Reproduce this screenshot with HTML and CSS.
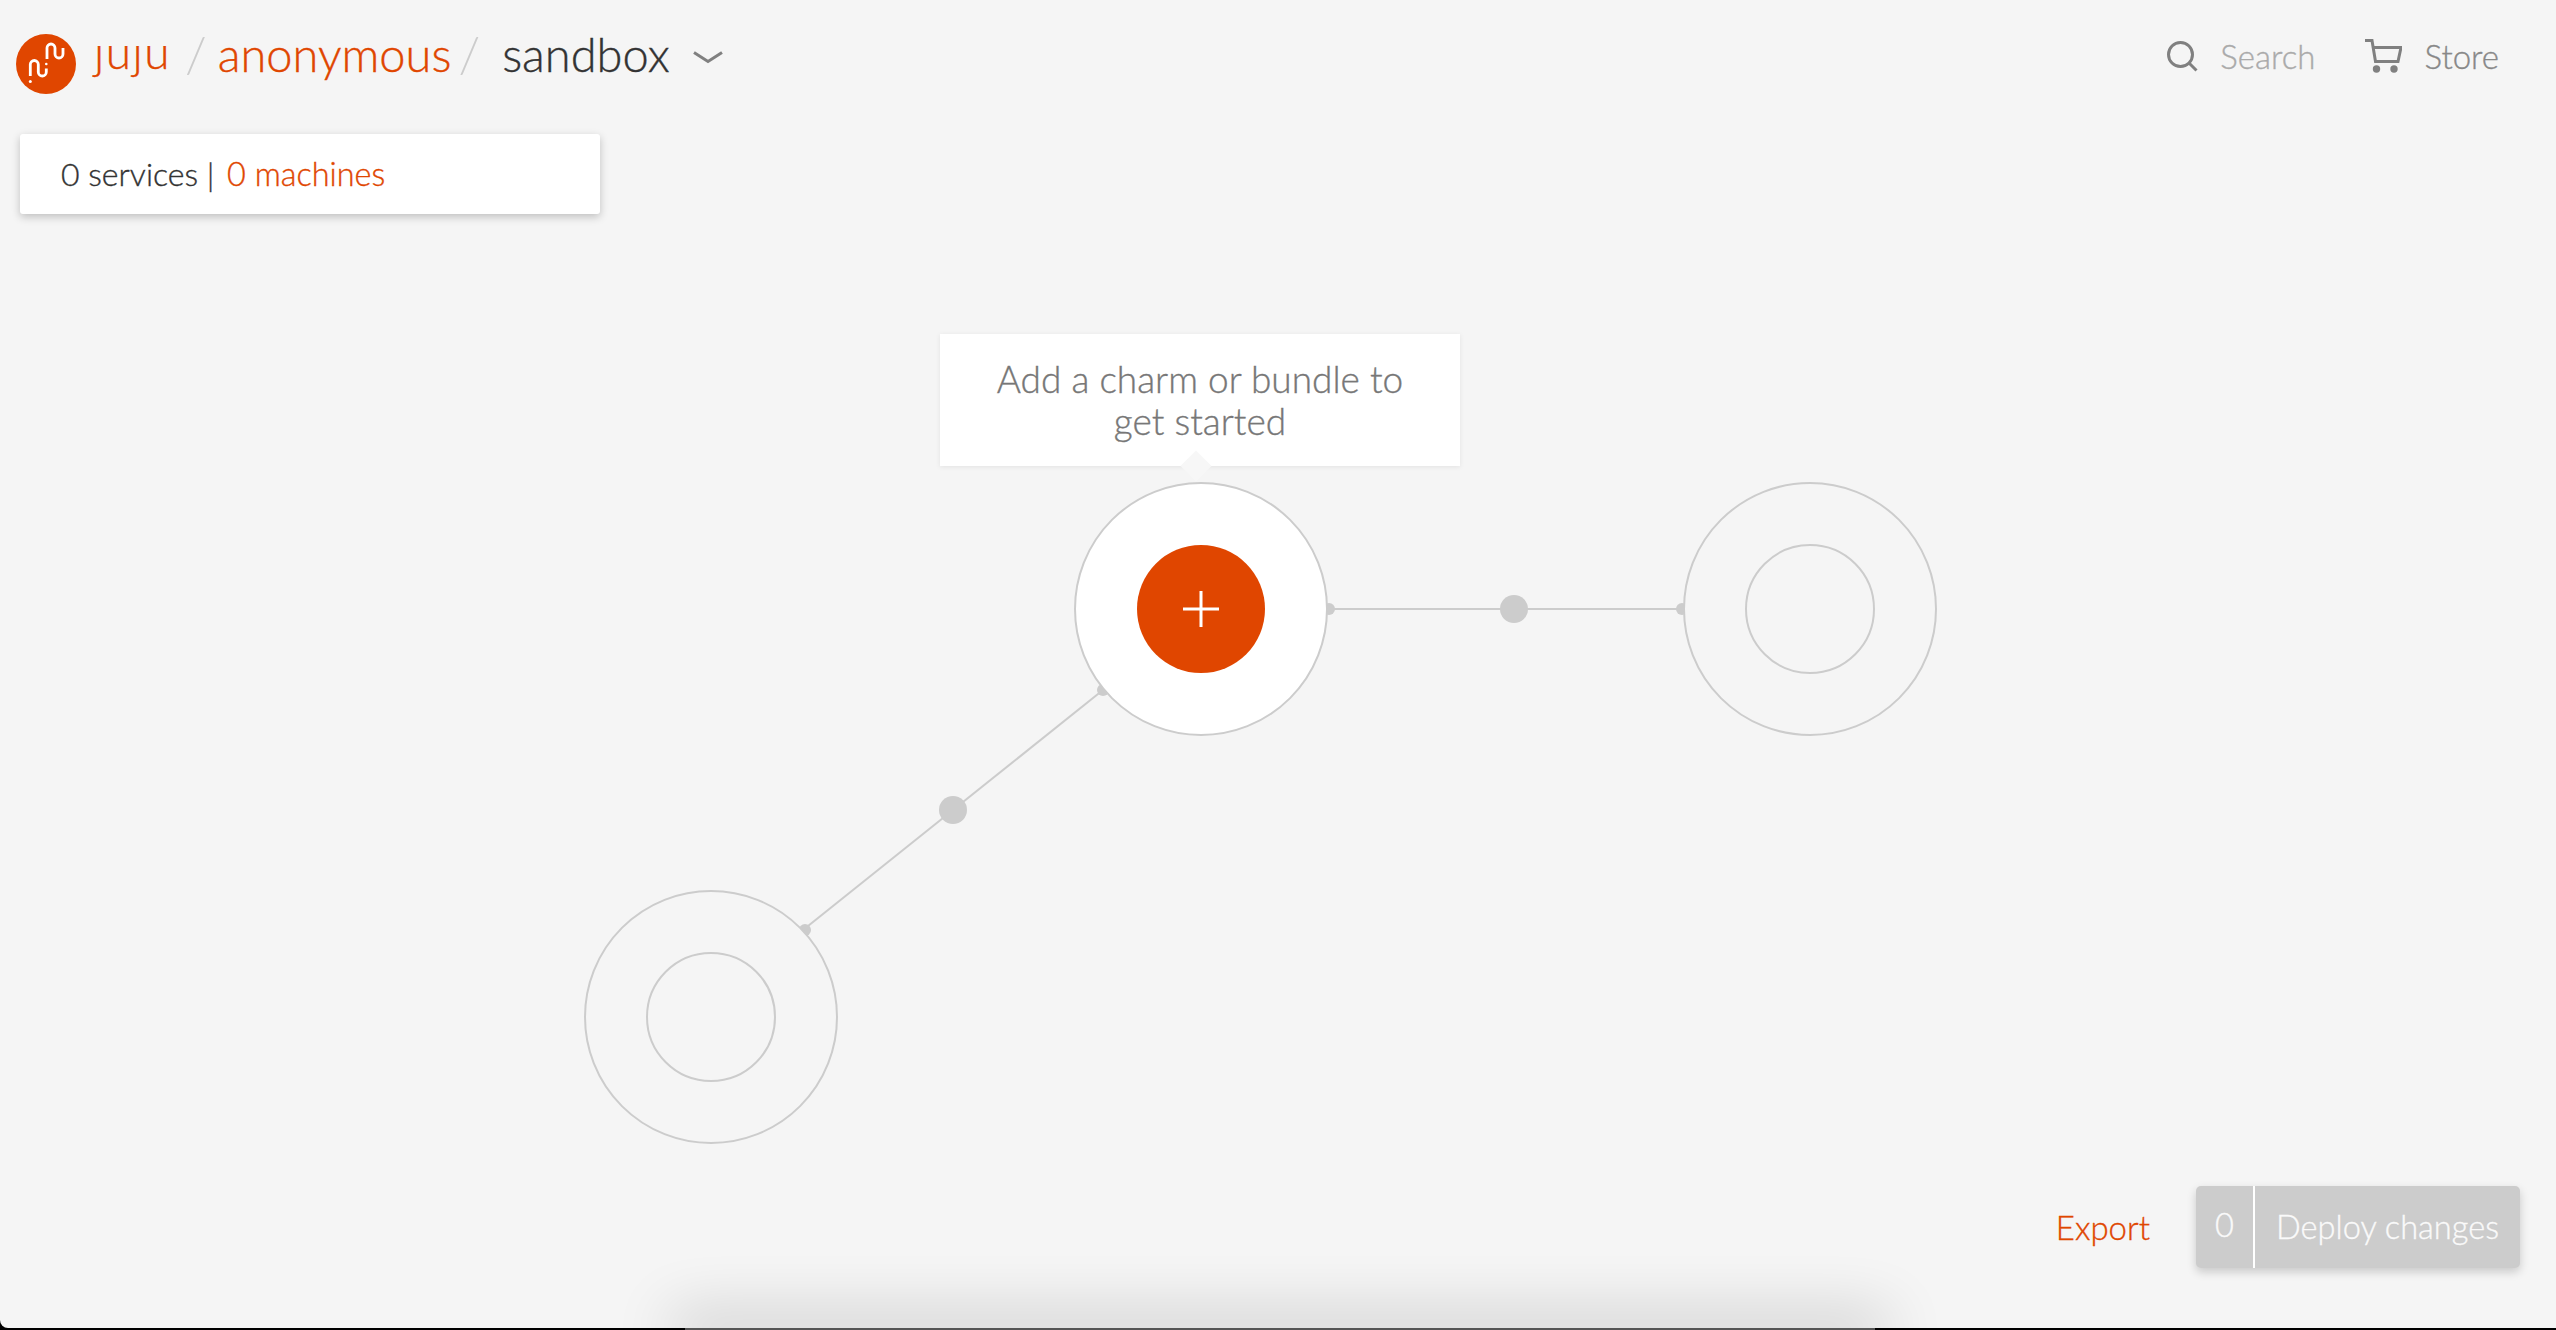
FILE: index.html
```html
<!DOCTYPE html><html lang="en"><head><meta charset="utf-8">
<meta name="viewport" content="width=device-width,initial-scale=1">
<title>juju / anonymous / sandbox</title>
<link rel="stylesheet" href="styles.css">
</head>

<body>
  <div class="app">
    <!-- diagram sits under everything else -->
    <svg class="diagram" width="2556" height="1328" viewBox="0 0 2556 1328">
      <line class="rel" x1="1327" y1="609" x2="1684" y2="609"/>
      <line class="rel" x1="1103" y1="690" x2="803" y2="930"/>
      <circle class="dot" cx="1514" cy="609" r="14"/>
      <circle class="dot" cx="953" cy="810" r="14"/>
      <circle class="dot" cx="1329" cy="609" r="6"/>
      <circle class="dot" cx="1682" cy="609" r="6"/>
      <circle class="dot" cx="1103" cy="690" r="6"/>
      <circle class="dot" cx="805" cy="930" r="6"/>

      <circle class="ring" cx="1810" cy="609" r="126"/>
      <circle class="ring" cx="1810" cy="609" r="64"/>
      <circle class="ring" cx="711" cy="1017" r="126"/>
      <circle class="ring" cx="711" cy="1017" r="64"/>

      <circle class="ring ring-main" cx="1201" cy="609" r="126"/>
      <circle class="add" cx="1201" cy="609" r="64"/>
      <path class="plus" d="M1183 609H1219M1201 591V627"/>
    </svg>

    <header class="topbar">
      <div class="crumbs">
        <svg class="logo" width="60" height="60" viewBox="0 0 60 60">
          <circle class="logo-bg" cx="30" cy="30" r="30"/>
          <path class="logo-line" d="M14.3 42V30.5a4 4 0 0 1 8 0V38a4 4 0 0 0 8 0V34.5M31 25V14a4 4 0 0 1 8 0V20a4 4 0 0 0 8 0V14"/>
          <circle class="logo-dot" cx="14.3" cy="47.5" r="1.5"/>
          <circle class="logo-dot" cx="30.3" cy="30" r="1.3"/>
        </svg>
        <a class="wordmark">juju</a>
        <span class="slash">/</span>
        <a class="crumb">anonymous</a>
        <span class="slash slash-2">/</span>
        <span class="crumb crumb-model">sandbox</span>
        <svg class="chevron" width="30" height="13" viewBox="0 0 30 13"><path d="M1 1.5L15 10.5L29 1.5"/></svg>
      </div>
      <nav class="tools">
        <a class="tool tool-search">
          <svg width="31" height="31" viewBox="0 0 31 31"><circle cx="13.5" cy="13.5" r="12"/><path d="M22 22L29.5 29.5"/></svg>
          Search
        </a>
        <a class="tool tool-store">
          <svg width="37" height="34" viewBox="0 0 37 34">
            <path d="M0 1.5H7L10.5 22.5H33L36 8.5H8.5"/>
            <circle cx="11.5" cy="30" r="3.7"/><circle cx="29" cy="30" r="3.7"/>
          </svg>
          Store
        </a>
      </nav>
    </header>

    <div class="summary">0 services | <a class="link">0 machines</a></div>

    <div class="hint">
      Add a charm or bundle to<br>get started
    </div>

    <div class="actions">
      <a class="link export">Export</a>
      <button class="deploy"><span class="deploy-count">0</span><span class="deploy-label">Deploy changes</span></button>
    </div>
  </div>
  <div class="next-window"></div>
</body></html>
```

FILE: styles.css
```css
:root{
  --orange:#e04600;
  --line:#ccc;
  --text:#333;
  --bg:#f5f5f5;
}
*{box-sizing:border-box}
html,body{height:100%}
body{margin:0;background:#000;overflow:hidden;position:relative;font-family:"Lato","Open Sans",sans-serif;font-weight:300;color:var(--text);-webkit-text-stroke:.35px currentColor}
.app{position:relative;height:1328px;background:var(--bg);border-radius:0 0 0 8px;overflow:hidden}

/* ---------- diagram ---------- */
.diagram{position:absolute;left:0;top:0}
.rel{stroke:var(--line);stroke-width:2}
.dot{fill:var(--line)}
.ring{fill:var(--bg);stroke:var(--line);stroke-width:2}
.ring-main{fill:#fff}
.add{fill:var(--orange)}
.plus{stroke:#fff;stroke-width:3;fill:none}

/* ---------- header ---------- */
.topbar{position:relative;display:flex;justify-content:space-between;align-items:center;height:94px;padding:34px 57px 0 16px}
.crumbs{display:flex;align-items:flex-start;height:60px;font-size:47px;line-height:40px}
.logo{flex:none}
.logo-bg{fill:var(--orange)}
.logo-line{fill:none;stroke:#fff;stroke-width:2.8}
.logo-dot{fill:#fff}
/* top of the line is clipped: the logo's j has no dot */
.wordmark{margin-left:18px;color:var(--orange);font-size:46px;line-height:36px;letter-spacing:1.5px;clip-path:inset(12px 0 -30px -10px)}
.slash{margin-left:14px;color:var(--line);font-size:50px;-webkit-text-stroke:0}
.crumb{margin-left:11px;color:var(--orange)}
.slash-2{margin-left:7px}
.crumb-model{margin-left:22px;color:var(--text)}
.chevron{margin:17px 0 0 23px}
.chevron path{fill:none;stroke:#808080;stroke-width:3}
.tools{display:flex;align-items:center;gap:50px;margin-top:-16px;font-size:33px}
.tool{display:flex;align-items:center;gap:22px}
.tool svg{fill:none;stroke:#808080;stroke-width:3}
.tool-search{color:#aaa}
.tool-store{color:#888}
.tool-store circle{fill:#808080;stroke:none}

/* ---------- summary card ---------- */
.summary{position:relative;width:580px;height:80px;margin:40px 0 0 20px;padding-left:41px;background:#fff;border-radius:3px;font-size:32px;line-height:80px;box-shadow:0 3px 9px rgba(0,0,0,.22)}
.summary .link{margin-left:4px;font-size:32.4px}
.link{color:var(--orange)}

/* ---------- hint tooltip ---------- */
.hint{position:absolute;left:940px;top:334px;width:520px;height:132px;padding-top:24px;background:#fff;text-align:center;font-size:37px;line-height:42px;color:#777;box-shadow:0 1px 5px rgba(0,0,0,.08)}
.hint::after{content:"";position:absolute;left:245px;top:121px;width:22px;height:22px;background:#f7f7f7;transform:rotate(45deg)}

/* ---------- bottom actions ---------- */
.actions{position:absolute;right:36px;top:1186px;display:flex;align-items:center;gap:46px;font-size:33px}
.deploy{display:flex;align-items:center;width:324px;height:82px;padding:0;border:0;border-radius:5px;background:var(--line);color:#fafafa;font:inherit;font-size:32.6px;box-shadow:0 4px 10px rgba(0,0,0,.18)}
.deploy-count{width:59px;height:100%;line-height:78px;text-align:center;border-right:2px solid #fff}
.deploy-label{padding-left:21px;line-height:78px}

/* the edge of the window behind this one */
.next-window{position:absolute;left:685px;bottom:0;width:1190px;height:2px;background:#555;box-shadow:0 0 60px 14px rgba(0,0,0,.2)}
```
